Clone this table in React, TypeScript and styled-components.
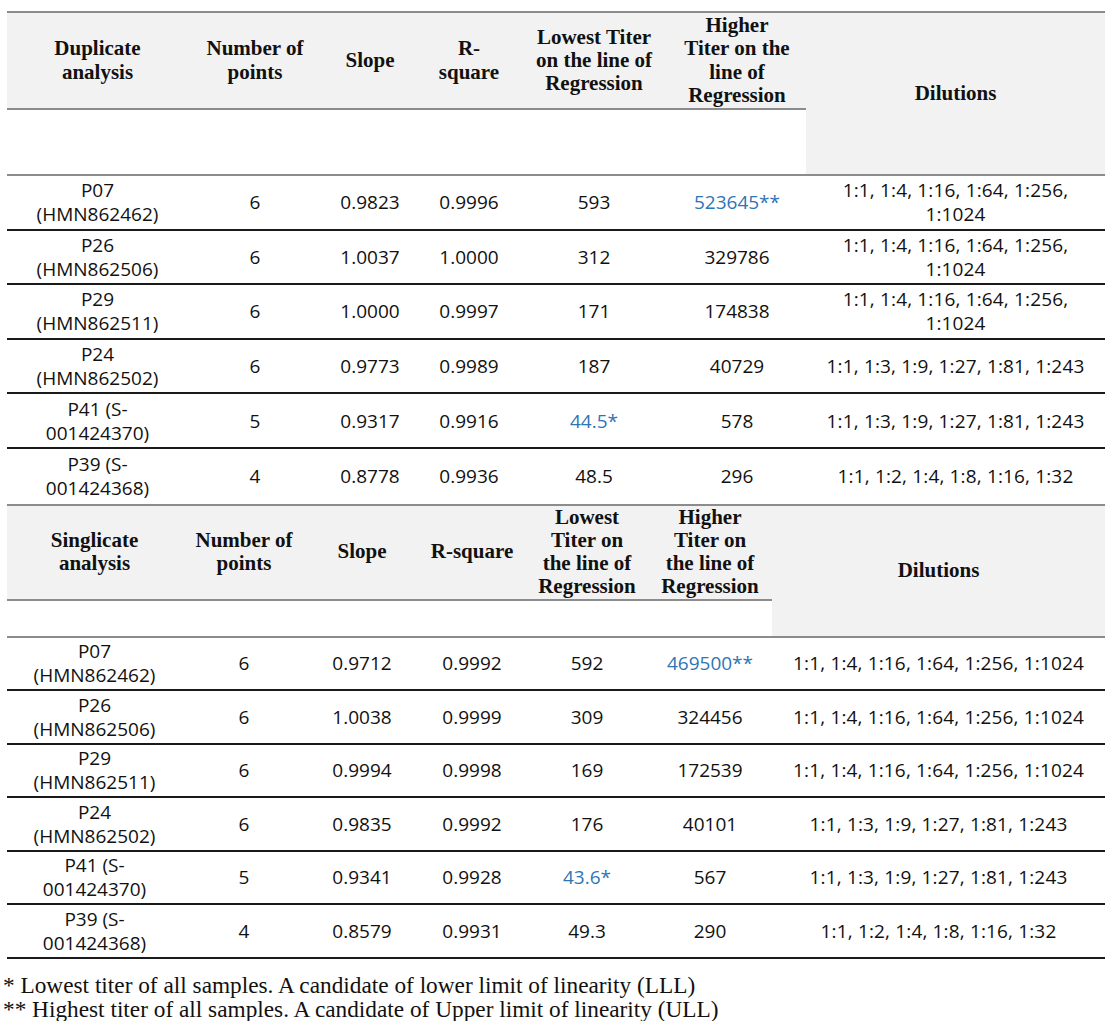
import { FC } from "react";
import styled, { createGlobalStyle } from "styled-components";

interface IRow {
  sample: string[];
  points: string;
  slope: string;
  rsq: string;
  low: string;
  high: string;
  dilutions: string[];
  lowMark?: boolean;
  highMark?: boolean;
}

interface ITable {
  widths: number[];
  heads: string[][];
  headHeight: number;
  spacerHeight: number;
  rowHeight: number;
  rows: IRow[];
  lastRule: boolean;
}

const FOUR = ["1:1, 1:4, 1:16, 1:64, 1:256,", "1:1024"];
const FOUR_ONE = ["1:1, 1:4, 1:16, 1:64, 1:256, 1:1024"];
const THREE = ["1:1, 1:3, 1:9, 1:27, 1:81, 1:243"];
const TWO = ["1:1, 1:2, 1:4, 1:8, 1:16, 1:32"];

const duplicate: ITable = {
  widths: [181, 134, 96, 102, 148, 138, 299],
  heads: [
    ["Duplicate", "analysis"],
    ["Number of", "points"],
    ["Slope"],
    ["R-", "square"],
    ["Lowest Titer", "on the line of", "Regression"],
    ["Higher", "Titer on the", "line of", "Regression"],
    ["Dilutions"],
  ],
  headHeight: 99,
  spacerHeight: 66,
  rowHeight: 54.6,
  lastRule: false,
  rows: [
    { sample: ["P07", "(HMN862462)"], points: "6", slope: "0.9823", rsq: "0.9996", low: "593", high: "523645**", highMark: true, dilutions: FOUR },
    { sample: ["P26", "(HMN862506)"], points: "6", slope: "1.0037", rsq: "1.0000", low: "312", high: "329786", dilutions: FOUR },
    { sample: ["P29", "(HMN862511)"], points: "6", slope: "1.0000", rsq: "0.9997", low: "171", high: "174838", dilutions: FOUR },
    { sample: ["P24", "(HMN862502)"], points: "6", slope: "0.9773", rsq: "0.9989", low: "187", high: "40729", dilutions: THREE },
    { sample: ["P41 (S-", "001424370)"], points: "5", slope: "0.9317", rsq: "0.9916", low: "44.5*", lowMark: true, high: "578", dilutions: THREE },
    { sample: ["P39 (S-", "001424368)"], points: "4", slope: "0.8778", rsq: "0.9936", low: "48.5", high: "296", dilutions: TWO },
  ],
};

const singlicate: ITable = {
  widths: [175, 124, 112, 108, 122, 124, 333],
  heads: [
    ["Singlicate", "analysis"],
    ["Number of", "points"],
    ["Slope"],
    ["R-square"],
    ["Lowest", "Titer on", "the line of", "Regression"],
    ["Higher", "Titer on", "the line of", "Regression"],
    ["Dilutions"],
  ],
  headHeight: 97,
  spacerHeight: 37,
  rowHeight: 53.5,
  lastRule: true,
  rows: [
    { sample: ["P07", "(HMN862462)"], points: "6", slope: "0.9712", rsq: "0.9992", low: "592", high: "469500**", highMark: true, dilutions: FOUR_ONE },
    { sample: ["P26", "(HMN862506)"], points: "6", slope: "1.0038", rsq: "0.9999", low: "309", high: "324456", dilutions: FOUR_ONE },
    { sample: ["P29", "(HMN862511)"], points: "6", slope: "0.9994", rsq: "0.9998", low: "169", high: "172539", dilutions: FOUR_ONE },
    { sample: ["P24", "(HMN862502)"], points: "6", slope: "0.9835", rsq: "0.9992", low: "176", high: "40101", dilutions: THREE },
    { sample: ["P41 (S-", "001424370)"], points: "5", slope: "0.9341", rsq: "0.9928", low: "43.6*", lowMark: true, high: "567", dilutions: THREE },
    { sample: ["P39 (S-", "001424368)"], points: "4", slope: "0.8579", rsq: "0.9931", low: "49.3", high: "290", dilutions: TWO },
  ],
};

const Lines: FC<{ lines: string[] }> = ({ lines }) => (
  <>
    {lines.map((l, i) => (
      <span key={i}>
        {i > 0 && <br />}
        {l}
      </span>
    ))}
  </>
);

const DataTable: FC<{ table: ITable }> = ({ table }) => {
  const last = table.heads.length - 1;
  return (
    <Table>
      <colgroup>
        {table.widths.map((w, i) => (
          <Col key={i} $w={w} />
        ))}
      </colgroup>
      <thead>
        <HeadRow $h={table.headHeight}>
          {table.heads.map((h, i) => (
            <HeadCell key={i} rowSpan={i === last ? 2 : 1}>
              <Lines lines={h} />
            </HeadCell>
          ))}
        </HeadRow>
        <SpacerRow $h={table.spacerHeight}>
          <SpacerCell colSpan={last} />
        </SpacerRow>
      </thead>
      <tbody>
        {table.rows.map((r, i) => (
          <BodyRow
            key={i}
            $h={table.rowHeight}
            $rule={table.lastRule || i < table.rows.length - 1}
          >
            <Cell>
              <Lines lines={r.sample} />
            </Cell>
            <Cell>{r.points}</Cell>
            <Cell>{r.slope}</Cell>
            <Cell>{r.rsq}</Cell>
            <Cell $accent={r.lowMark}>{r.low}</Cell>
            <Cell $accent={r.highMark}>{r.high}</Cell>
            <Cell $wide>
              <Lines lines={r.dilutions} />
            </Cell>
          </BodyRow>
        ))}
      </tbody>
    </Table>
  );
};

const App: FC = () => {
  return (
    <Page>
      <GlobalStyle />
      <Tables>
        <DataTable table={duplicate} />
        <DataTable table={singlicate} />
      </Tables>
      <Notes>
        <Note>* Lowest titer of all samples. A candidate of lower limit of linearity (LLL)</Note>
        <Note>** Highest titer of all samples. A candidate of Upper limit of linearity (ULL)</Note>
      </Notes>
    </Page>
  );
};

export default App;

const GlobalStyle = createGlobalStyle`
  html, body {
    margin: 0;
    padding: 0;
    background: #ffffff;
  }
`;

const Page = styled.div`
  width: 1113px;
  padding: 11px 0 0 3px;
  box-sizing: border-box;
  color: #111111;
`;

const Tables = styled.div`
  margin-left: 4px;
  width: 1098px;
  display: flex;
  flex-direction: column;
`;

const Table = styled.table`
  width: 1098px;
  table-layout: fixed;
  border-collapse: separate;
  border-spacing: 0;
`;

const Col = styled.col<{ $w: number }>`
  width: ${({ $w }) => $w}px;
`;

const HeadRow = styled.tr<{ $h: number }>`
  height: ${({ $h }) => $h}px;
`;

const HeadCell = styled.th`
  background: #f2f2f2;
  border-top: 2px solid #8c8c8c;
  border-bottom: 2px solid #8c8c8c;
  padding: 0;
  font-family: "Liberation Serif", "Times New Roman", serif;
  font-weight: 700;
  font-size: 21px;
  line-height: 23.2px;
  white-space: nowrap;
  text-align: center;
  vertical-align: middle;
  color: #111111;
`;

const SpacerRow = styled.tr<{ $h: number }>`
  height: ${({ $h }) => $h}px;
`;

const SpacerCell = styled.td`
  padding: 0;
  border-bottom: 2px solid #8c8c8c;
  background: #ffffff;
`;

const BodyRow = styled.tr<{ $h: number; $rule: boolean }>`
  height: ${({ $h }) => $h}px;

  td {
    border-bottom: ${({ $rule }) => ($rule ? "2px solid #1a1a1a" : "0")};
  }
`;

const Cell = styled.td<{ $accent?: boolean; $wide?: boolean }>`
  padding: 0;
  font-family: "Open Sans", "Liberation Sans", sans-serif;
  font-size: 19px;
  line-height: 24px;
  letter-spacing: ${({ $wide }) => ($wide ? "0.15px" : "0")};
  text-align: center;
  vertical-align: middle;
  white-space: nowrap;
  color: ${({ $accent }) => ($accent ? "#2e75b6" : "#111111")};
`;

const Notes = styled.div`
  padding-top: 14px;
  display: flex;
  flex-direction: column;
`;

const Note = styled.p`
  margin: 0;
  font-family: "Liberation Serif", "Times New Roman", serif;
  font-size: 23.3px;
  line-height: 24px;
  color: #111111;
`;
